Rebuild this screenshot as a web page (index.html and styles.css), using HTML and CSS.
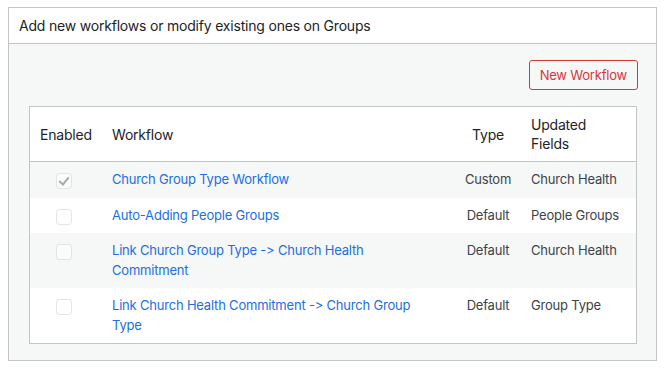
FILE: index.html
```html
<!doctype html>
<html lang="en">
	<head>
		<meta name="viewport" content="width=device-width,initial-scale=1" />
		<title>Workflows</title>
		<link rel="stylesheet" href="styles.css">
	</head>
	<body>
		<div class="postbox">
			<h2 class="postbox-title">Add new workflows or modify existing ones on Groups</h2>

			<div class="inside">
				<p class="actions">
					<button type="button" class="button-new">New Workflow</button>
				</p>

				<table class="widefat">
					<colgroup>
						<col class="col-enabled" />
						<col class="col-workflow" />
						<col class="col-type" />
						<col class="col-fields" />
					</colgroup>
					<thead>
						<tr>
							<th>Enabled</th>
							<th>Workflow</th>
							<th class="center">Type</th>
							<th>Updated Fields</th>
						</tr>
					</thead>
					<tbody>
						<tr>
							<td><input type="checkbox" class="check" checked disabled /></td>
							<td class="name"><a href="#">Church Group Type Workflow</a></td>
							<td class="center">Custom</td>
							<td>Church Health</td>
						</tr>
						<tr>
							<td><input type="checkbox" class="check" disabled /></td>
							<td class="name"><a href="#">Auto-Adding People Groups</a></td>
							<td class="center">Default</td>
							<td>People Groups</td>
						</tr>
						<tr>
							<td><input type="checkbox" class="check" disabled /></td>
							<td class="name"><a href="#">Link Church Group Type -&gt; Church Health Commitment</a></td>
							<td class="center">Default</td>
							<td>Church Health</td>
						</tr>
						<tr>
							<td><input type="checkbox" class="check" disabled /></td>
							<td class="name"><a href="#">Link Church Health Commitment -&gt; Church Group Type</a></td>
							<td class="center">Default</td>
							<td>Group Type</td>
						</tr>
					</tbody>
				</table>
			</div>
		</div>
	</body>
</html>
```

FILE: styles.css
```css
body {
	margin: 0;
	padding: 7px 9px 0 8px;
	background: #fff;
	color: #3c434a;
	font-family: Inter, "Liberation Sans", sans-serif;
	font-size: 13px;
	font-feature-settings: "calt" 0;
	letter-spacing: -0.2px;
}

.postbox {
	border: 1px solid #c3c4c7;
	background: #f6f7f7;
}

.postbox-title {
	margin: 0;
	padding: 8px 10px;
	border-bottom: 1px solid #c3c4c7;
	background: #fff;
	color: #1d2327;
	font-size: 14px;
	font-weight: 400;
	line-height: 19px;
}

.inside {
	padding: 16px 19px 16px 20px;
}

.actions {
	display: block flex;
	justify-content: flex-end;
	margin: 0 0 16px;
}

.button-new {
	box-sizing: border-box;
	min-height: 30px;
	margin-right: -1px;
	padding: 0 10px;
	border: 1px solid #d63638;
	border-radius: 3px;
	background: #f6f7f7;
	color: #d63638;
	font: inherit;
	font-size: 13px;
	line-height: 28px;
	letter-spacing: inherit;
}

.widefat {
	inline-size: 100%;
	border: 1px solid #c3c4c7;
	border-spacing: 0;
	background: #fff;
	table-layout: fixed;

	& .col-enabled { inline-size: 72px; }
	& .col-type { inline-size: 66px; }
	& .col-fields { inline-size: 115px; }

	& th {
		padding: 8px 10px;
		border-bottom: 1px solid #c3c4c7;
		color: #1d2327;
		font-size: 14px;
		font-weight: 400;
		line-height: 19px;
		text-align: left;
		vertical-align: middle;
	}

	& td {
		padding: 8px 10px;
		line-height: 19.5px;
		vertical-align: top;
	}

	& td.name {
		padding-right: 32px;
	}

	& tbody tr:nth-child(odd) {
		background: #f6f7f7;
	}

	& .center {
		text-align: center;
	}

	& a {
		color: #1b6fe0;
		text-decoration: none;
	}
}

.check {
	appearance: none;
	position: relative;
	display: block;
	box-sizing: border-box;
	inline-size: 16px;
	block-size: 16px;
	margin: 3px 0 0 16px;
	border: 1px solid rgba(220, 220, 222, 0.75);
	border-radius: 4px;
	background: rgba(255, 255, 255, 0.5);

	&:checked::before {
		content: "";
		position: absolute;
		left: 4px;
		top: 1px;
		inline-size: 4px;
		block-size: 8px;
		border: solid #a7aaad;
		border-width: 0 2.5px 2.5px 0;
		transform: rotate(40deg);
	}
}
```
